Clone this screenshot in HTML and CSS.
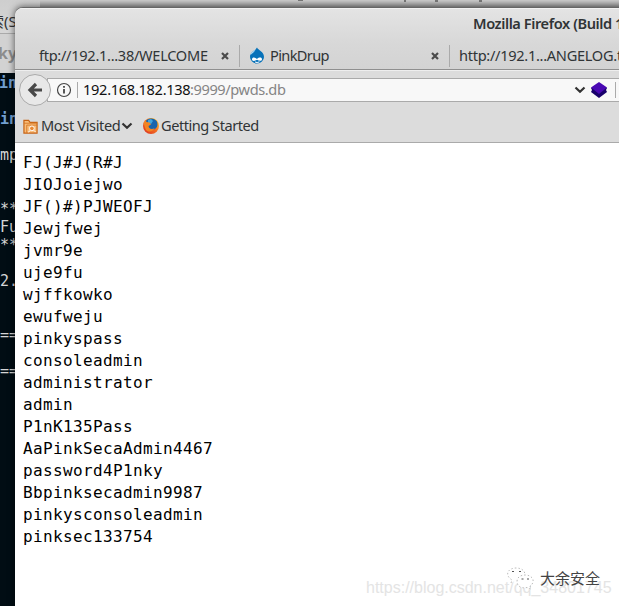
FILE: index.html
```html
<!DOCTYPE html>
<html lang="en">
<head>
<meta charset="utf-8">
<title>Mozilla Firefox</title>
<link rel="stylesheet" href="styles.css">
</head>
<body>
<div class="desktop">
  <div class="back-window">
    <div class="back-title">索(S)</div>
    <div class="back-tab">ky</div>
    <pre class="terminal"><b>in</b>

<b>in</b>

mp


**
Fu
**

2.


==

==</pre>
  </div>
  <div class="peek"><i class="p1"></i><i class="p2"></i><i class="p3"></i><i class="p4"></i></div>
  <main class="browser">
    <header class="titlebar"><span class="t-title">Mozilla Firefox (Build 1</span></header>
    <nav class="tabs">
      <div class="tab tab-one"><span class="t-ftp">ftp://192.1...38/WELCOME</span>
        <svg class="close" viewBox="0 0 8 8"><path d="M1 1l6 6M7 1L1 7"/></svg></div>
      <div class="tab tab-two">
        <svg class="drupal" viewBox="0 0 16 17"><path d="M8 .5C9 3 15 4.500 15 10A7 6.500 0 0 1 1 10C1 5 6 4 8 .5Z" fill="#0872b9"/><path d="M7 2C5 4 2 5 1.500 8L5 5Z" fill="#a9d9f5"/><path d="M3 12.500C3 10 6 10 8 12c2-2 5-2 5 .3 0 2-3 2-5 .4-2 1.500-5 1.700-5-.2Z" fill="#fff"/><path d="M6 15q2 1.200 4.500-.2" stroke="#fff" fill="none"/></svg>
        <span class="t-pink">PinkDrup</span>
        <svg class="close" viewBox="0 0 8 8"><path d="M1 1l6 6M7 1L1 7"/></svg></div>
      <div class="tab tab-three"><span class="t-http">http://192.1...ANGELOG.txt</span></div>
    </nav>
    <div class="toolbar">
      <div class="back"><svg viewBox="0 0 16 16"><path d="M15 8H4M9 2L3 8l6 6" fill="none" stroke="#484848" stroke-width="3.200"/></svg></div>
      <div class="urlbar">
        <svg class="info" viewBox="0 0 16 16"><circle cx="8" cy="8" r="6.500" fill="none" stroke="#444" stroke-width="1.200"/><path d="M8 7v4.500M8 4v1.800" stroke="#444" stroke-width="1.800"/></svg>
        <i class="sep"></i>
        <span class="t-host">192.168.182.138</span><span class="t-path">:9999/pwds.db</span>
        <svg class="chev" viewBox="0 0 12 8"><path d="M1.500 1.500L6 5.800l4.500-4.300"/></svg>
        <svg class="gem" viewBox="0 0 16 16"><path d="M8 1l8 5-1 2 1 2-8 6-8-6 1-2-1-2Z" fill="#18006b"/><path d="M8 0l8 5.500L8 12 0 5.500Z" fill="#4908b3"/></svg>
        <i class="sep end"></i>
      </div>
    </div>
    <div class="bookmarks">
      <svg class="folder" viewBox="0 0 16 16"><path d="M1 15V1.500h5l1.500 2H15V15Z" fill="#f8bd7a" stroke="#c76314" stroke-width="1.300"/><path d="M1 4.500h14M4 15V6.500h11" stroke="#d87a27" fill="none"/><circle cx="9.500" cy="10" r="2.500" fill="#e88a35" stroke="#fff"/><path d="M11.500 12l2 2M5.500 14l2-1.500" stroke="#fff"/></svg>
      <span class="t-most">Most Visited</span>
      <svg class="chev" viewBox="0 0 12 8"><path d="M1.500 1.500L6 5.800l4.500-4.300"/></svg>
      <svg class="fox" viewBox="0 0 16 16"><defs><linearGradient id="fire" x1="0" y1="1" x2="1" y2="0"><stop stop-color="#d92c21"/><stop offset=".5" stop-color="#f26b22"/><stop offset="1" stop-color="#ffd52a"/></linearGradient></defs><circle cx="8" cy="8" r="8" fill="url(#fire)"/><path d="M2 4.500C4-.5 11-.7 14 3.500c1 3 .5 6-2 7.500-3 1.500-6 0-6.500-2Z" fill="#1765ad"/><path d="M5 2l3-1 2 2-2 3-3-1Z" fill="#40a5dd"/><path d="M.5 5L2.500 2l1 2 3 .5L8 6.500 5.500 8c0 3 4 4 6 2-1 4-7 5-9 1Z" fill="#f28423"/></svg>
      <span class="t-get">Getting Started</span>
    </div>
    <pre class="page">FJ(J#J(R#J
JIOJoiejwo
JF()#)PJWEOFJ
Jewjfwej
jvmr9e
uje9fu
wjffkowko
ewufweju
pinkyspass
consoleadmin
administrator
admin
P1nK135Pass
AaPinkSecaAdmin4467
password4P1nky
Bbpinksecadmin9987
pinkysconsoleadmin
pinksec133754</pre>
  </main>
  <div class="csdn">https://blog.csdn.net/qq_34801745</div>
  <div class="wechat">
    <svg viewBox="0 0 28 24"><g fill="#fff" stroke="#aaa" stroke-width=".8" stroke-dasharray="1.500 2"><path d="M5 17l1-3C-2 9 2 2 10 2c6 0 9 3 9 7"/><path d="M24 20l1 3-4-1.500C14 23 11 19 11 15.500 11 11 15 9 19 9c8 0 11 7 5 11Z"/></g><path d="M6 5.500h2M13 5.500h2M15.500 13h2M21 13h2" stroke="#555" stroke-width="1.200"/></svg>
    <span>大余安全</span>
  </div>
</div>
</body>
</html>
```
FILE: styles.css
```css
* { box-sizing: border-box; }
body { margin: 0; overflow: hidden; }
svg { display: block; flex: none; }
pre { margin: 0; }
.desktop {
  position: relative; width: 619px; height: 606px; overflow: hidden;
  background: linear-gradient(#cbcbcb, #9b9b9b 8px, #9b9b9b 9px);
  font-family: "Noto Sans", "Open Sans", sans-serif; font-size: 14.6px; color: #303436;
}
.back-window { width: 40px; height: 606px; background: #d2d2d2; }
.back-title {
  height: 34px; padding-top: 9px; line-height: 25px; border-bottom: 1px solid #aaa;
  font-family: "Noto Sans", "Noto Sans CJK SC", sans-serif; font-size: 15px;
  text-indent: -11px; white-space: nowrap; color: #333;
  background: linear-gradient(#cecece, #d6d6d6);
}
.back-tab { height: 39px; line-height: 38px; font-size: 16px; font-weight: 700; color: #8c8c8c; text-indent: -2px; }
.terminal {
  height: 533px; padding-top: 1px; background: #010d14; color: #d6d6d6;
  font: 15px/18px "DejaVu Sans Mono", monospace; text-indent: -1px;
}
.terminal b { color: #729fcf; }
.peek { position: absolute; top: 0; left: 0; }
.peek i { position: absolute; top: 0; width: 5px; height: 1px; background: #777; }
.peek .p1 { left: 298px; }
.peek .p2 { left: 404px; width: 2px; height: 2px; }
.peek .p3 { left: 435px; width: 3px; height: 2px; }
.peek .p4 { left: 479px; width: 3px; height: 2px; }
.browser {
  position: absolute; left: 15px; top: 7px; width: 640px; height: 620px;
  display: flex; flex-direction: column; overflow: hidden;
  background: #fff; border-top: 1px solid #666; border-radius: 8px 0 0 0;
  box-shadow: 0 0 6px 1px rgba(0, 0, 0, .5);
}
.browser span { white-space: pre; }
.titlebar {
  height: 35px; padding-left: 458px; line-height: 31px; font-weight: 600; letter-spacing: -.42px;
  background: linear-gradient(#e4e4e4, #d8d8d8); box-shadow: inset 0 1px #f1f1f1;
}
.tabs { display: flex; height: 27px; padding-top: 2px; background: linear-gradient(#d8d8d8, #d3d3d3); border-bottom: 1px solid #8f8f8f; }
.tab { display: flex; align-items: center; height: 22px; line-height: 20px; }
.tab span { padding-bottom: 2px; }
.tab-one { width: 224px; padding-left: 24px; }
.tab-two { width: 210px; padding-left: 9px; border-left: 1px solid #aaa; }
.tab-three { padding-left: 9px; border-left: 1px solid #aaa; }
.t-ftp, .t-http { letter-spacing: -.3px; }
.t-pink { letter-spacing: -.65px; }
.close { width: 8px; height: 8px; margin: 0 10px 0 auto; }
.close path { stroke: #4b4b4b; stroke-width: 2.200; }
.drupal { width: 16px; height: 17px; margin: 0 5px 1px 0; }
.toolbar { display: flex; align-items: center; height: 41px; padding: 0 0 2px 4px; background: #dcdcdc; border-top: 1px solid #eee; }
.back {
  display: flex; align-items: center; justify-content: center; flex: none;
  width: 32px; height: 32px; margin-right: -4px; z-index: 1;
  border: 1px solid #aaa; border-radius: 50%; background: #e8e8e8;
}
.back svg { width: 16px; height: 16px; }
.urlbar {
  display: flex; align-items: center; flex: 1; height: 24px; padding-left: 8px;
  background: #f8f8f8; border: 1px solid #aaa;
}
.urlbar span, .bookmarks span { padding-bottom: 2px; }
.info { width: 16px; height: 16px; }
.sep { flex: none; width: 1px; height: 16px; margin: 0 5px; background: #aaa; }
.t-host { width: 107px; color: #111; letter-spacing: -.3px; }
.t-path { width: 384px; color: #858585; letter-spacing: -.4px; }
.urlbar .sep.end { margin-left: 8px; }
.chev { width: 12px; height: 8px; }
.chev path { fill: none; stroke: #333; stroke-width: 2.200; }
.gem { width: 16px; height: 16px; margin-left: 5px; }
.bookmarks { display: flex; align-items: center; height: 32px; padding: 0 0 2px 8px; background: #dcdcdc; border-bottom: 1px solid #aaa; }
.folder { width: 15px; height: 15px; margin: 2px 3px 0 0; }
.fox { width: 16px; height: 16px; margin: 0 2px 0 10px; }
.t-most { width: 80px; letter-spacing: -.37px; }
.t-get { letter-spacing: -.48px; }
.page { padding: 9px 8px; color: #000; font: 16px/22px "DejaVu Sans Mono", monospace; letter-spacing: .368px; }
.csdn {
  position: absolute; left: 366px; top: 578px; white-space: nowrap;
  font: 16px/20px "Liberation Sans", sans-serif; color: #e4e4e4;
}
.wechat {
  position: absolute; left: 506px; top: 565px; display: flex; align-items: center;
  font: 15px/26px "Noto Sans CJK SC", sans-serif; color: #444;
}
.wechat svg { width: 28px; height: 24px; margin-right: 6px; }
```
